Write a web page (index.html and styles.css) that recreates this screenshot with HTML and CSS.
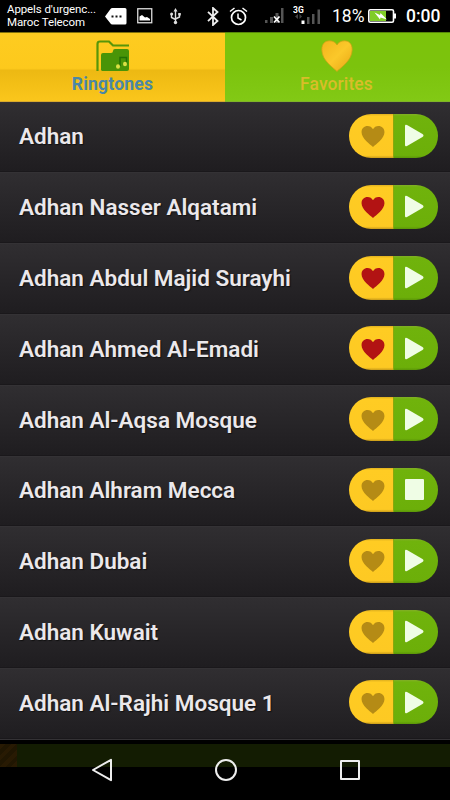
FILE: index.html
```html
<!DOCTYPE html>
<html lang="en">

<head>
    <meta charset="UTF-8">
    <meta name="viewport" content="width=device-width, initial-scale=1.0">
    <title>Adhan Ringtones</title>
    <link rel="stylesheet" href="styles.css">
</head>

<body>

    <!-- Shared shapes -->
    <svg width="0" height="0" class="defs">
        <defs>
            <linearGradient id="gold" x1="0" y1="0" x2="1" y2="1">
                <stop offset="0" stop-color="#f2b41c"/>
                <stop offset="0.5" stop-color="#fbc82a"/>
                <stop offset="1" stop-color="#e8a514"/>
            </linearGradient>
            <symbol id="heart" viewBox="0 0 24 22">
                <path d="M12 22C9 19 0 13 0 6.500C0 2.500 2.800 0 6.300 0C8.700 0 10.900 1.200 12 3.500C13.100 1.200 15.300 0 17.700 0C21.200 0 24 2.500 24 6.500C24 13 15 19 12 22Z"/>
            </symbol>
            <symbol id="play" viewBox="0 0 19 23">
                <path d="M0 2Q0 0 2 1L17.500 10Q19.500 11.500 17.500 13L2 22Q0 23 0 21Z"/>
            </symbol>
            <symbol id="stop" viewBox="0 0 19 23">
                <rect x="0" y="1" width="19" height="21" rx="1"/>
            </symbol>
        </defs>
    </svg>

    <!-- Status bar -->
    <div class="status-bar">
        <div class="carrier">Appels d'urgenc...<br>Maroc Telecom</div>
        <svg class="icon-message" width="22" height="17" viewBox="0 0 22 17">
            <path d="M0 8.500L5.500 1Q6 0 7.500 0H20Q21.500 0 21.500 1.500V15Q21.500 16.500 20 16.500H7.500Q6 16.500 5.500 15.500Z" fill="#fff"/>
            <path d="M6.500 7.500h2v2h-2zM10.500 7.500h2v2h-2zM14.500 7.500h2v2h-2z" fill="#111"/>
        </svg>
        <svg class="icon-picture" width="16" height="16" viewBox="0 0 16 16">
            <rect x="0.750" y="0.750" width="14" height="14" fill="none" stroke="#ddd" stroke-width="1.300"/>
            <path d="M2.500 12.500V8.500L5 7L8 9.500L10 9L13 11V12.500Z" fill="#fff"/>
        </svg>
        <svg class="icon-usb" width="11" height="17" viewBox="0 0 11 17">
            <path d="M5.500 2V15M1.500 6V9.500L5.500 11.500M9.500 6V9L5.500 11" fill="none" stroke="#ddd" stroke-width="1.400"/>
            <path d="M3.500 3.500L5.500 0L7.500 3.500ZM8.200 5h2.600v2.600H8.200Z" fill="#ddd"/>
            <circle cx="1.600" cy="6" r="1.500" fill="#ddd"/>
            <circle cx="5.500" cy="14.500" r="1.700" fill="#ddd"/>
        </svg>
        <svg class="icon-bluetooth" width="12" height="19" viewBox="0 0 12 19">
            <path d="M1 4.800L10.500 14L6 18V1L10.500 5L1 14.200" fill="none" stroke="#eee" stroke-width="1.800"/>
        </svg>
        <svg class="icon-alarm" width="19" height="19" viewBox="0 0 19 19">
            <circle cx="9.500" cy="10.500" r="7" fill="none" stroke="#fff" stroke-width="1.700"/>
            <path d="M1 4.500L5.500 1M18 4.500L13.500 1M9 6.500V11L12.500 13" fill="none" stroke="#fff" stroke-width="1.500"/>
        </svg>
        <svg class="icon-signal" width="19" height="17" viewBox="0 0 19 17">
            <path d="M0 12h2.500v3H0zM5 9h3v6H5zM10.500 5h3v10h-3zM16 0h2.500v15H16z" fill="#555"/>
            <path d="M9 8.500L14.500 14.500M14.500 8.500L9 14.500" stroke="#fff" stroke-width="1.700"/>
        </svg>
        <svg class="icon-network" width="28" height="21" viewBox="0 0 28 21">
            <path d="M14 11h2.500v7H14zM19 8h2.500v10H19zM24.500 3.500H27V18h-2.500z" fill="#555"/>
            <path d="M8.500 14.500h3V18h-3z" fill="#fff"/>
            <path d="M5 8L2 10.500L5 13ZM6.500 8L9 10.500L6.500 13Z" fill="#444"/>
            <text x="0" y="6.500" class="net-label">3G</text>
        </svg>
        <div class="percent">18%</div>
        <svg class="icon-battery" width="29" height="15" viewBox="0 0 29 15">
            <rect x="0.800" y="0.800" width="24.700" height="12.400" rx="1.500" fill="none" stroke="#fff" stroke-width="1.600"/>
            <path d="M26 4.500H28V9.500H26Z" fill="#fff"/>
            <rect x="2" y="2" width="16" height="10" fill="#80cc28"/>
            <path d="M6.500 3.500L12 6L12.500 4L19 10.500L12.500 8.500L12 10.500Z" fill="#fff"/>
        </svg>
        <div class="clock">0:00</div>
    </div>

    <!-- Tabs -->
    <div class="tabs">
        <div class="tab tab-ringtones">
            <svg width="34" height="32" viewBox="0 0 34 32">
                <path d="M1.500 31V4Q1.500 1.500 4 1.500H13L17 5.500H33" fill="none" stroke="#579609" stroke-width="2.200"/>
                <path d="M5 30V15Q5 13 7 13H15Q17 13 17 11Q17 9 19 9H31Q33 9 33 11V29Q33 31 31 31H6Z" fill="#499407"/>
                <path d="M24 26V17.500H30.500V24" fill="none" stroke="#236f05" stroke-width="1.500"/>
                <ellipse cx="22" cy="26.500" rx="2" ry="2.300" fill="#dbe044"/>
                <ellipse cx="29" cy="24" rx="2" ry="2.300" fill="#dbe044"/>
            </svg>
            <span>Ringtones</span>
        </div>
        <div class="tab tab-favorites">
            <svg width="32" height="32" viewBox="0 0 32 32">
                <path d="M16 31.500C13 28 .8 21 .8 9.500C.8 4 4 .8 8.500 .8C12 .8 14.800 2.500 16 5C17.200 2.500 20 .8 23.500 .8C28 .8 31.200 4 31.200 9.500C31.200 21 19 28 16 31.500Z" fill="url(#gold)" stroke="#c9a514" stroke-width="0.800"/>
            </svg>
            <span>Favorites</span>
        </div>
    </div>

    <!-- Ringtone list -->
    <div class="list">
        <div class="row">
            <div class="name">Adhan</div>
            <div class="pill">
                <div class="fav"><svg><use href="#heart"/></svg></div>
                <div class="play"><svg><use href="#play"/></svg></div>
            </div>
        </div>
        <div class="row">
            <div class="name">Adhan Nasser Alqatami</div>
            <div class="pill">
                <div class="fav active"><svg><use href="#heart"/></svg></div>
                <div class="play"><svg><use href="#play"/></svg></div>
            </div>
        </div>
        <div class="row">
            <div class="name">Adhan Abdul Majid Surayhi</div>
            <div class="pill">
                <div class="fav active"><svg><use href="#heart"/></svg></div>
                <div class="play"><svg><use href="#play"/></svg></div>
            </div>
        </div>
        <div class="row">
            <div class="name">Adhan Ahmed Al-Emadi</div>
            <div class="pill">
                <div class="fav active"><svg><use href="#heart"/></svg></div>
                <div class="play"><svg><use href="#play"/></svg></div>
            </div>
        </div>
        <div class="row">
            <div class="name">Adhan Al-Aqsa Mosque</div>
            <div class="pill">
                <div class="fav"><svg><use href="#heart"/></svg></div>
                <div class="play"><svg><use href="#play"/></svg></div>
            </div>
        </div>
        <div class="row">
            <div class="name">Adhan Alhram Mecca</div>
            <div class="pill">
                <div class="fav"><svg><use href="#heart"/></svg></div>
                <div class="play"><svg><use href="#stop"/></svg></div>
            </div>
        </div>
        <div class="row">
            <div class="name">Adhan Dubai</div>
            <div class="pill">
                <div class="fav"><svg><use href="#heart"/></svg></div>
                <div class="play"><svg><use href="#play"/></svg></div>
            </div>
        </div>
        <div class="row">
            <div class="name">Adhan Kuwait</div>
            <div class="pill">
                <div class="fav"><svg><use href="#heart"/></svg></div>
                <div class="play"><svg><use href="#play"/></svg></div>
            </div>
        </div>
        <div class="row">
            <div class="name">Adhan Al-Rajhi Mosque 1</div>
            <div class="pill">
                <div class="fav"><svg><use href="#heart"/></svg></div>
                <div class="play"><svg><use href="#play"/></svg></div>
            </div>
        </div>
    </div>

    <!-- Navigation bar -->
    <div class="nav-bar">
        <svg width="22" height="24" viewBox="0 0 22 24">
            <path d="M20 1.800V22.200L2 12Z"/>
        </svg>
        <svg width="24" height="24" viewBox="0 0 24 24">
            <circle cx="12" cy="12" r="10"/>
        </svg>
        <svg width="22" height="24" viewBox="0 0 22 24">
            <rect x="2" y="3" width="18" height="18"/>
        </svg>
    </div>

</body>

</html>
```
FILE: styles.css
```css
* {
    box-sizing: border-box;
}

body {
    display: flex;
    flex-direction: column;
    width: 450px;
    height: 800px;
    margin: 0;
    overflow: hidden;
    background-color: #000;
    font-family: Roboto, "Liberation Sans", sans-serif;
}

svg {
    display: block;
    flex: none;
}

.defs {
    position: absolute;
}

/* Status bar */
.status-bar {
    display: flex;
    align-items: center;
    height: 32px;
    padding-left: 7px;
    color: #fff;
    white-space: nowrap;
}

.carrier {
    width: 98px;
    font-size: 11.5px;
    line-height: 13px;
    letter-spacing: -0.1px;
}

.icon-picture { margin-left: 10px; }
.icon-usb { margin-left: 17px; }
.icon-bluetooth { margin-left: 26px; }
.icon-alarm { margin-left: 10px; }
.icon-signal { margin-left: 17px; }
.icon-network { margin-left: 9px; }

.net-label {
    font-size: 8.5px;
    font-weight: bold;
    fill: #fff;
}

.percent {
    width: 36px;
    margin-left: 11px;
    font-size: 17.5px;
}

.clock {
    margin-left: 9px;
    font-size: 17.5px;
    font-weight: 500;
}

/* Tabs */
.tabs {
    display: flex;
    height: 69.6px;
}

.tab {
    display: flex;
    flex: 1;
    flex-direction: column;
    align-items: center;
    padding-top: 7px;
    font-size: 17.5px;
    line-height: 20px;
    border-top: 1px solid #80700c;
    border-bottom: 1px solid #d9aa2c;
}

.tab-ringtones {
    background: linear-gradient(#fecc20, #fdc91c 52%, #edb913 55%, #f3bf16 75%, #fac61c);
    color: #4a87a6;
    font-weight: 700;
    letter-spacing: 0.2px;
}

.tab-favorites {
    background: linear-gradient(#7cc30b, #7cc30d 50%, #82c915);
    border-top-color: #568808;
    border-bottom-color: #80b528;
    color: #d9bd29;
    font-weight: 500;
    letter-spacing: 0.1px;
}

.tab-favorites svg,
.tab-favorites span {
    margin-right: 2px;
}

.tab span {
    margin-top: 2px;
}

/* List */
.list {
    height: 638.4px;
    border-bottom: 1px solid #343235;
}

.row {
    display: flex;
    align-items: center;
    justify-content: space-between;
    height: 70.8px;
    padding: 0 12px 0 19px;
    background: linear-gradient(#302e31, #1f1d20);
    border-top: 1px solid #343235;
    border-bottom: 1px solid #1a181b;
}

.name {
    margin-bottom: 1px;
    color: #ebe8eb;
    font-size: 22.5px;
    font-weight: 600;
    text-shadow: 1px 1px 1px #111;
    white-space: nowrap;
}

.pill {
    display: flex;
    width: 89px;
    height: 44px;
    margin-bottom: 2px;
    overflow: hidden;
    border-radius: 22px;
}

.fav,
.play {
    display: flex;
    align-items: center;
    width: 44px;
    height: 44px;
}

.fav {
    padding-left: 12px;
    background: linear-gradient(#dfb01f, #ffcc23 5%, #fdc923 94%, #c99b19);
    fill: #b58b15;
}

.fav.active {
    fill: #b21313;
}

.play {
    width: 45px;
    padding-left: 11px;
    background: linear-gradient(#82af26, #70b30c 5%, #6caf09 94%, #5b9608);
    border-left: 1px solid #8aa70c;
    fill: #effde5;
}

.fav svg {
    width: 24px;
    height: 21px;
    margin-top: 2px;
}

.play svg {
    width: 19px;
    height: 23px;
}

/* Navigation bar */
.nav-bar {
    display: flex;
    flex: 1;
    justify-content: space-between;
    padding: 14px 89px 0 91px;
    margin-top: 4px;
    background:
        repeating-linear-gradient(135deg, #281a03 0 4px, #201602 4px 8px) 0 0 / 17px 23px no-repeat,
        linear-gradient(#131c02, #131c02) 0 0 / 100% 23px no-repeat;
}

.nav-bar svg {
    fill: none;
    stroke: #eee;
    stroke-width: 2;
    stroke-linejoin: round;
}
```
